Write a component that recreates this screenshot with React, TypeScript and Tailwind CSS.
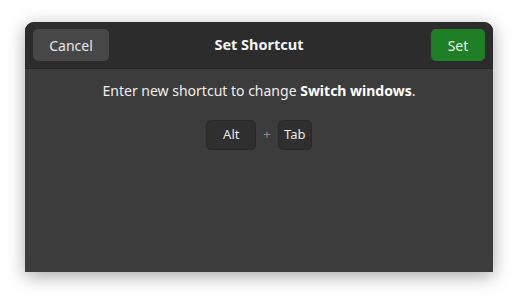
export default function App() {
  return (
    <div className="w-[518px] h-[300px] bg-white flex flex-col items-center" style={{ fontFamily: '"Noto Sans", "Open Sans", sans-serif' }}>
      <div className="mt-[22px] w-[468px] h-[250px] flex flex-col bg-[#3c3c3c] rounded-t-[9px] shadow-[0_4px_18px_rgba(0,0,0,0.35)] overflow-hidden">
        {/* Header bar */}
        <div className="h-[47px] shrink-0 bg-[#2c2c2c] border-b border-[#262626] grid grid-cols-[1fr_auto_1fr] items-center px-2">
          <div className="flex">
            <button className="w-[76px] h-[32px] rounded-[5px] bg-[#474747] text-[#e8e8e8] text-[14px]">
              Cancel
            </button>
          </div>
          <span className="text-[14.5px] font-bold text-[#f2f2f2]">Set Shortcut</span>
          <div className="flex justify-end">
            <button className="w-[54px] h-[32px] rounded-[5px] bg-[#1f7f27] text-[#e4f4e4] text-[14px]">
              Set
            </button>
          </div>
        </div>

        {/* Body */}
        <div className="flex-1 flex flex-col items-center pt-[12px]">
          <p className="text-[14px] text-[#eeeeee] leading-[20px]">
            Enter new shortcut to change <span className="font-bold text-white">Switch windows</span>.
          </p>
          <div className="mt-[19px] flex items-center gap-[7px]">
            <span className="w-[50px] h-[30px] flex items-center justify-center rounded-[5px] bg-[#2f2f2f] border border-[#282828] text-[#e6e6e6] text-[13px]">
              Alt
            </span>
            <span className="text-[#8a8a8a] text-[13px]">+</span>
            <span className="w-[34px] h-[30px] flex items-center justify-center rounded-[5px] bg-[#2f2f2f] border border-[#282828] text-[#e6e6e6] text-[13px]">
              Tab
            </span>
          </div>
        </div>
      </div>
    </div>
  )
}
